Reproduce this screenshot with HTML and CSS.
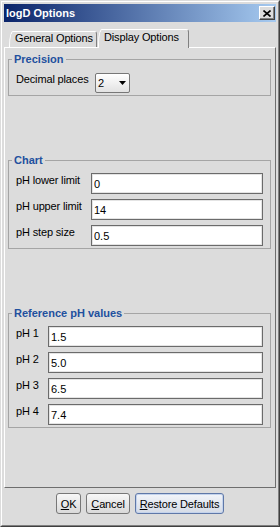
FILE: index.html
```html
<!DOCTYPE html>
<html lang="en">
<head>
    <meta charset="UTF-8">
    <title>logD Options</title>
    <link rel="stylesheet" href="styles.css">
</head>
<body>
<div class="window">
  <div class="frame">
    <div class="titlebar">
      <span class="title">logD Options</span>
      <span class="close">
        <svg width="8" height="7" viewBox="0 0 8 7"><path d="M0.5 0.5 L7.5 6.5 M7.5 0.5 L0.5 6.5" stroke="#000" stroke-width="1.6" fill="none"/></svg>
      </span>
    </div>

    <div class="tabs">
      <div class="tab">General Options</div>
      <div class="tab active">Display Options</div>
    </div>

    <div class="panel">
      <fieldset class="group precision">
        <legend>Precision</legend>
        <div class="form">
          <label>Decimal places</label>
          <div class="combo">
            <span>2</span>
            <svg width="7" height="4" viewBox="0 0 7 4"><polygon points="0,0 7,0 3.5,4" fill="#000"/></svg>
          </div>
        </div>
      </fieldset>

      <fieldset class="group chart">
        <legend>Chart</legend>
        <div class="form">
          <label>pH lower limit</label>
          <input class="field" type="text" value="0">
          <label>pH upper limit</label>
          <input class="field" type="text" value="14">
          <label>pH step size</label>
          <input class="field" type="text" value="0.5">
        </div>
      </fieldset>

      <fieldset class="group reference">
        <legend>Reference pH values</legend>
        <div class="form">
          <label>pH 1</label>
          <input class="field" type="text" value="1.5">
          <label>pH 2</label>
          <input class="field" type="text" value="5.0">
          <label>pH 3</label>
          <input class="field" type="text" value="6.5">
          <label>pH 4</label>
          <input class="field" type="text" value="7.4">
        </div>
      </fieldset>
    </div>

    <div class="buttons">
      <button class="btn"><u>O</u>K</button>
      <button class="btn"><u>C</u>ancel</button>
      <button class="btn default"><u>R</u>estore Defaults</button>
    </div>
  </div>
</div>
</body>
</html>
```

FILE: styles.css
```css
body {
    margin: 0;
    font-family: "Liberation Sans", Arial, sans-serif;
    font-size: 11px;
    color: #000;
    background-color: #dcdcdc;
}
.window {
    box-sizing: border-box;
    width: 280px;
    height: 527px;
    border: 1px solid;
    border-color: #dcdcdc #404040 #404040 #dcdcdc;
}
.frame {
    box-sizing: border-box;
    height: 100%;
    border: 1px solid;
    border-color: #fff #808080 #808080 #fff;
    padding: 2px;
    background-color: #dcdcdc;
}

/* title bar */
.titlebar {
    display: flex;
    align-items: center;
    justify-content: space-between;
    height: 18px;
    padding: 0 1px 0 2px;
    background: linear-gradient(to right, #0a246a, #a6caf0);
}
.title {
    color: #fff;
    font-weight: bold;
    line-height: 18px;
}
.close {
    box-sizing: border-box;
    display: flex;
    align-items: center;
    justify-content: center;
    width: 16px;
    height: 14px;
    background-color: #dcdcdc;
    border: 1px solid;
    border-color: #fff #404040 #404040 #fff;
    box-shadow: inset -1px -1px 0 #808080;
}

/* tabs */
.tabs {
    position: relative;
    z-index: 1;
    display: flex;
    align-items: flex-end;
    height: 18px;
    margin-top: 7px;
    padding-left: 5px;
}
.tab {
    box-sizing: border-box;
    width: 88px;
    height: 16px;
    padding: 0 0 0 5px;
    line-height: 13px;
    white-space: nowrap;
    letter-spacing: -0.15px;
    border: 1px solid;
    border-bottom: 0;
    border-color: #fff #808080 #fff #fff;
    border-top-left-radius: 4px 15px;
    border-top-right-radius: 3px;
    background-color: #dcdcdc;
}
.tab.active {
    width: 91px;
    height: 19px;
    margin-left: 1px;
    margin-bottom: -1px;
    padding-top: 1px;
}

/* content panel */
.panel {
    box-sizing: border-box;
    height: 441px;
    padding: 5px 4px 0 3px;
    border: 1px solid;
    border-color: #fff #6e6e6e #6e6e6e #fff;
}
.group {
    margin: 0;
    min-width: 0;
    padding: 6px 7px 2px 7px;
    border: 1px solid #a5a5a5;
}
.group legend {
    margin-left: -4px;
    padding: 0 2px;
    line-height: 13px;
    font-weight: bold;
    color: #22509e;
}
.chart, .reference {
    margin-top: 58px;
}
.form {
    display: grid;
    grid-auto-rows: 21px;
    row-gap: 5px;
    align-items: start;
}
.precision .form { grid-template-columns: 79px 35px; }
.chart .form { grid-template-columns: 75px 1fr; }
.reference .form { grid-template-columns: 32px 1fr; }
.form label {
    padding-top: 1px;
    line-height: 13px;
    white-space: nowrap;
    letter-spacing: -0.15px;
}
.field {
    box-sizing: border-box;
    width: 100%;
    height: 21px;
    margin: 0;
    padding: 0 2px;
    font: inherit;
    color: #000;
    background-color: #fff;
    border: 1px solid #6b6b6b;
    box-shadow: inset 0 0 0 1px #e4e4e4;
    outline: none;
}
.combo {
    box-sizing: border-box;
    display: flex;
    align-items: center;
    justify-content: space-between;
    height: 20px;
    margin-top: 1px;
    padding: 0 3px 0 2px;
    border: 1px solid #777;
    border-radius: 2px;
    background: linear-gradient(#ffffff, #e2e2e2);
}

/* bottom buttons */
.buttons {
    display: flex;
    justify-content: center;
    gap: 5px;
    margin-top: 5px;
}
.btn {
    height: 21px;
    padding: 0 4px;
    font: inherit;
    letter-spacing: -0.15px;
    color: #000;
    border: 1px solid #777;
    border-radius: 3px;
    background: linear-gradient(#f7f7f7, #dadada);
}
.btn.default {
    border-color: #5f78a8;
    box-shadow: inset 0 0 0 1px #c4d3ec;
    background: linear-gradient(#f2f5fa, #d5dbe6);
}
```
